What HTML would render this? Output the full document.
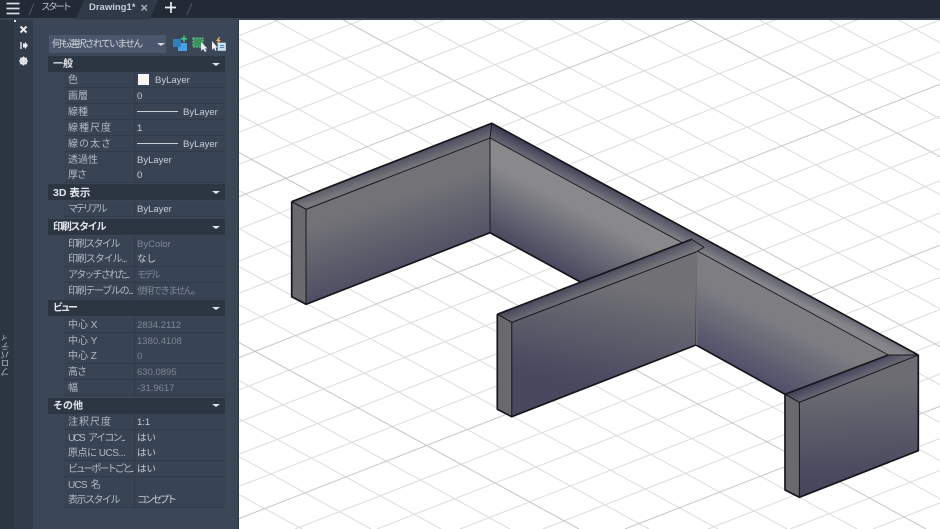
<!DOCTYPE html>
<html lang="ja"><head><meta charset="utf-8"><title>Drawing1</title>
<style>
html,body{margin:0;padding:0;background:#fff;width:940px;height:529px;overflow:hidden}
#p{position:relative;width:940px;height:529px;overflow:hidden;background:#fff;font-family:"Liberation Sans","Noto Sans CJK JP",sans-serif;font-size:9.5px;color:#c6cbd3;filter:blur(.35px)}
#p div{position:absolute;white-space:nowrap}
svg{position:absolute;left:0;top:0}
.h{left:48px;width:177px;height:16px;background:#2c3542;color:#e4e6ea;line-height:18px;text-indent:5px;font-weight:bold;font-size:10px}
.r{left:64px;width:161px;height:15px;background:#384354;border-bottom:1px solid #303a49;line-height:17px}
.r i{position:absolute;left:4px;top:0;font-style:normal;color:#b3bac4;font-size:10px}
.r b{position:absolute;left:73px;top:0;font-weight:normal;color:#c9ced6}
.r b.g{color:#7d8795}
.r:before{content:"";position:absolute;left:70px;top:0;width:1px;height:16px;background:#303a49}
.ln{position:absolute;left:73px;top:7px;width:41px;height:1px;background:#c9ced6}
.by{position:absolute;left:119px;top:0;color:#c9ced6}
</style></head><body>
<div id="p">
<svg width="940" height="529" viewBox="0 0 940 529">
<defs>
<linearGradient id="gL" gradientUnits="userSpaceOnUse" x1="420" y1="285" x2="392" y2="200"><stop offset="0" stop-color="#45465e"/><stop offset="1" stop-color="#727277"/></linearGradient>
<linearGradient id="gB" gradientUnits="userSpaceOnUse" x1="540" y1="262" x2="570" y2="205"><stop offset="0" stop-color="#47475f"/><stop offset="1" stop-color="#89898b"/></linearGradient>
<linearGradient id="gC" gradientUnits="userSpaceOnUse" x1="745" y1="372" x2="772" y2="318"><stop offset="0" stop-color="#50506a"/><stop offset="1" stop-color="#7e7e82"/></linearGradient>
<linearGradient id="gM" gradientUnits="userSpaceOnUse" x1="590" y1="385" x2="610" y2="285"><stop offset="0" stop-color="#48485f"/><stop offset="1" stop-color="#707075"/></linearGradient>
<linearGradient id="gR" gradientUnits="userSpaceOnUse" x1="855" y1="480" x2="850" y2="385"><stop offset="0" stop-color="#47475e"/><stop offset="1" stop-color="#6c6c72"/></linearGradient>
<linearGradient id="tL" gradientUnits="userSpaceOnUse" x1="388" y1="157" x2="394" y2="174"><stop offset="0" stop-color="#3f3f55"/><stop offset="1" stop-color="#77777c"/></linearGradient>
<linearGradient id="tB" gradientUnits="userSpaceOnUse" x1="712" y1="236" x2="703" y2="254"><stop offset="0" stop-color="#3f3f55"/><stop offset="1" stop-color="#85858a"/></linearGradient>
<linearGradient id="tM" gradientUnits="userSpaceOnUse" x1="593" y1="273" x2="600" y2="290"><stop offset="0" stop-color="#3f3f55"/><stop offset="1" stop-color="#77777c"/></linearGradient>
<linearGradient id="tR" gradientUnits="userSpaceOnUse" x1="835" y1="375" x2="842" y2="392"><stop offset="0" stop-color="#43435a"/><stop offset="1" stop-color="#7c7c82"/></linearGradient>
</defs>
<path fill="none" stroke="#dcdcdc" stroke-width="1" d="M862 0L940 42.7M793 0L940 80.7M723 0L940 118.7M585 0L940 194.7M515 0L940 232.7M446 0L940 270.7M377 0L940 308.7M239 .6L940 384.7M239 38.6L940 422.7M239 76.6L940 460.7M239 114.6L940 498.7M239 190.6L857 529M239 228.6L787 529M239 266.6L718 529M239 304.6L649 529M239 380.6L510 529M239 418.6L441 529M239 456.6L371 529M239 494.6L302 529M239 35.6L330 0M239 67.8L413 0M239 100L495 0M239 132.2L578 0M239 164.4L661 0M239 228.8L826 0M239 261L908 0M239 293.2L940 19.8M239 325.4L940 52M239 389.8L940 116.4M239 422L940 148.6M239 454.2L940 180.8M239 486.4L940 213M295 529L940 277.4M377 529L940 309.6M460 529L940 341.8M543 529L940 374M708 529L940 438.4M790 529L940 470.6M873 529L940 502.8"/>
<path fill="none" stroke="#c6c6c6" stroke-width="1" d="M654 0L940 156.7M307 0L940 346.7M239 152.6L926 529M239 342.6L579 529M239 196.6L743 0M239 357.6L940 84.2M239 518.6L940 245.2M625 529L940 406.2"/>
<g stroke="#16161c" stroke-width=".9" stroke-linejoin="round">
<polygon points="490,138 888.3,355 785,394.3 696,345 580,281.7 490,232.7" fill="url(#gB)" stroke="none"/>
<polygon points="696.7,251.7 888.3,355 785,394.3 696,345" fill="url(#gC)" stroke="none"/>
<path d="M490 232.7L580 281.7M696 345L785 394.3" fill="none" stroke-width="1.7"/>
<polygon points="491.7,123.3 918.3,355 888.3,355 490,138" fill="url(#tB)"/>
<polygon points="306,209.3 490,138 490,232.7 306,304.3" fill="url(#gL)"/>
<polygon points="291.7,201.7 491.7,123.3 490,138 306,209.3" fill="url(#tL)"/>
<polygon points="291.7,201.7 306,209.3 306,304.3 291.7,296.7" fill="#69696e"/>
<path d="M291.7 201.7L491.7 123.3L918.3 355M291.7 201.7V296.7L306 304.3L490 232.7" fill="none" stroke-width="1.7"/>
<polygon points="511.7,322.3 696.7,251.7 696,345 511.7,416.7" fill="url(#gM)"/>
<polygon points="497.3,314.3 691.7,239.3 704,247.3 696.7,251.7 511.7,322.3" fill="url(#tM)"/>
<polygon points="497.3,314.3 511.7,322.3 511.7,416.7 497.3,409.3" fill="#69696e"/>
<path d="M497.3 314.3L691.7 239.3M497.3 314.3V409.3L511.7 416.7L696 345" fill="none" stroke-width="1.7"/>
<path d="M696.7 252V345" fill="none" stroke="#7f7f85" stroke-width="1"/>
<polygon points="799.3,402.3 918.3,355 918.3,450.7 799.3,497.3" fill="url(#gR)"/>
<polygon points="785,394.3 888.3,355 918.3,355 799.3,402.3" fill="url(#tR)"/>
<polygon points="785,394.3 799.3,402.3 799.3,497.3 785,490" fill="#69696e"/>
<path d="M785 394.3L888.3 355M918.3 355V450.7L799.3 497.3L785 490V394.3" fill="none" stroke-width="1.7"/>
</g>
</svg>

<div style="left:0;top:0;width:940px;height:18px;background:#222a36"></div>
<div style="left:0;top:18px;width:940px;height:2px;background:#3a4454"></div>
<div style="left:0;top:20px;width:14px;height:509px;background:#2c3542"></div>
<div style="left:14px;top:20px;width:19px;height:509px;background:#323b49"></div>
<div style="left:33px;top:20px;width:205px;height:509px;background:#3b4657"></div>
<div style="left:238px;top:20px;width:1px;height:509px;background:#2c3542"></div>
<div style="left:14px;top:20px;width:2px;height:2px;background:#dfe3e8"></div>

<svg width="240" height="20" viewBox="0 0 240 20">
<polygon points="76,19 84,0 158,0 150,19" fill="#2f3947"/>
<path d="M6.500 3.500H19.500M6.500 8.500H19.500M6.500 13.500H19.500" stroke="#d9dce1" stroke-width="1.700"/>
<path d="M29 15L34 3M187 15L192 3" stroke="#4c5665" stroke-width="1"/>
<path d="M141.500 5L147 10.500M147 5L141.500 10.500" stroke="#a6adb8" stroke-width="1.500"/>
<path d="M171 2V13M165 7.500H176" stroke="#eceef1" stroke-width="1.700"/>
</svg>
<div style="left:41px;top:1px;line-height:14px;font-size:9.500px;letter-spacing:-2.4px;color:#bcc2cb">スタート</div>
<div style="left:89px;top:1px;line-height:14px;font-size:9.500px;font-weight:bold;color:#c9ced6">Drawing1*</div>

<svg width="240" height="80" viewBox="0 0 240 80" style="left:0;top:0">
<path d="M20.500 26.500L26.500 32.500M26.500 26.500L20.500 32.500" stroke="#e8eaee" stroke-width="2"/>
<path d="M21 42V49" stroke="#e8eaee" stroke-width="1.400"/><path d="M23 43.500H25V41.800L28 45.500L25 49.200V47.500H23Z" fill="#e8eaee"/>
<circle cx="23.500" cy="61" r="3" fill="none" stroke="#e8eaee" stroke-width="1.800"/>
<path d="M23.500 56.500V65.500M19 61H28M20.300 57.800L26.700 64.200M26.700 57.800L20.300 64.200" stroke="#e8eaee" stroke-width="1.100"/>
</svg>

<div style="left:49px;top:35px;width:117px;height:18px;background:#4a576d;border-radius:1px;line-height:19px;text-indent:3px;color:#d5d9df;font-size:9.800px;letter-spacing:-1.6px">何も選択されていません</div>
<div style="left:157px;top:43px;width:0;height:0;border-left:4px solid transparent;border-right:4px solid transparent;border-top:3px solid #d5d9df"></div>

<svg width="240" height="60" viewBox="0 0 240 60" style="left:0;top:0">
<rect x="178" y="43" width="9" height="8" fill="#4aa3e0"/><rect x="173" y="39" width="8" height="8" fill="#2e7fba"/>
<path d="M184 35.500V42M181 38.700H187" stroke="#3fcf7f" stroke-width="1.500"/>
<rect x="193" y="38" width="10" height="9" fill="#3f8f5f" stroke="#5fcf8a" stroke-dasharray="2 1"/>
<path d="M201 42V51L203 49L205 52L206.500 51L205 48.500H207.500Z" fill="#e8eaee"/>
<path d="M212 41V50L214 48L215.500 51L216.500 50.500L215.500 47.500H217.500Z" fill="#f2f2f2"/>
<path d="M219 37L216 41H218L217 44L221 40H219L220 37Z" fill="#e8b458"/>
<rect x="218" y="43" width="7.500" height="7.500" fill="#bfe0f2" stroke="#e8eaee" stroke-width=".6"/>
<path d="M220 45.500H224M220 47.500H224" stroke="#3a6f94" stroke-width=".8"/>
</svg>

<div class="h" style="top:56px">一般</div>
<div class="r" style="top:72px"><i>色</i><span style="position:absolute;left:74px;top:2px;width:11px;height:11px;background:#f7f7f7"></span><span class="by" style="left:91px">ByLayer</span></div>
<div class="r" style="top:88px"><i>画層</i><b>0</b></div>
<div class="r" style="top:104px"><i>線種</i><span class="ln"></span><span class="by">ByLayer</span></div>
<div class="r" style="top:120px"><i style="letter-spacing:1px">線種尺度</i><b>1</b></div>
<div class="r" style="top:136px"><i style="letter-spacing:1px">線の太さ</i><span class="ln"></span><span class="by">ByLayer</span></div>
<div class="r" style="top:152px"><i>透過性</i><b>ByLayer</b></div>
<div class="r" style="top:167px"><i style="letter-spacing:-1px">厚さ</i><b>0</b></div>

<div class="h" style="top:184px;font-size:10.500px">3D 表示</div>
<div class="r" style="top:201px"><i style="letter-spacing:-2.600px">マテリアル</i><b>ByLayer</b></div>

<div class="h" style="top:219px;letter-spacing:-1.300px">印刷スタイル</div>
<div class="r" style="top:236px"><i style="letter-spacing:-1.500px">印刷スタイル</i><b class="g">ByColor</b></div>
<div class="r" style="top:251px"><i style="letter-spacing:-1.100px">印刷スタイル...</i><b>なし</b></div>
<div class="r" style="top:267px"><i style="letter-spacing:-1.800px">アタッチされた...</i><b class="g" style="letter-spacing:-2.300px">モデル</b></div>
<div class="r" style="top:283px"><i style="letter-spacing:-1.300px">印刷テーブルの...</i><b class="g" style="letter-spacing:-1.700px">使用できません。</b></div>

<div class="h" style="top:300px;letter-spacing:-2.500px">ビュー</div>
<div class="r" style="top:317px"><i>中心 X</i><b class="g">2834.2112</b></div>
<div class="r" style="top:333px"><i>中心 Y</i><b class="g">1380.4108</b></div>
<div class="r" style="top:348px"><i>中心 Z</i><b class="g">0</b></div>
<div class="r" style="top:364px"><i style="letter-spacing:-1px">高さ</i><b class="g">630.0895</b></div>
<div class="r" style="top:380px"><i>幅</i><b class="g">-31.9617</b></div>

<div class="h" style="top:398px">その他</div>
<div class="r" style="top:414px"><i style="letter-spacing:1px">注釈尺度</i><b>1:1</b></div>
<div class="r" style="top:430px"><i style="letter-spacing:-1.700px;word-spacing:3px">UCS アイコン...</i><b>はい</b></div>
<div class="r" style="top:445px"><i style="letter-spacing:-.5px">原点に UCS...</i><b>はい</b></div>
<div class="r" style="top:461px"><i style="letter-spacing:-2.200px">ビューポートごと...</i><b>はい</b></div>
<div class="r" style="top:477px"><i style="letter-spacing:-.8px;word-spacing:2px">UCS 名</i></div>
<div class="r" style="top:492px"><i style="letter-spacing:-1.500px">表示スタイル</i><b style="letter-spacing:-2.500px;font-size:10px">コンセプト</b></div>

<div style="left:212px;top:63px;width:0;height:0;border-left:4px solid transparent;border-right:4px solid transparent;border-top:3px solid #e4e6ea"></div>
<div style="left:212px;top:191px;width:0;height:0;border-left:4px solid transparent;border-right:4px solid transparent;border-top:3px solid #e4e6ea"></div>
<div style="left:212px;top:226px;width:0;height:0;border-left:4px solid transparent;border-right:4px solid transparent;border-top:3px solid #e4e6ea"></div>
<div style="left:212px;top:307px;width:0;height:0;border-left:4px solid transparent;border-right:4px solid transparent;border-top:3px solid #e4e6ea"></div>
<div style="left:212px;top:404px;width:0;height:0;border-left:4px solid transparent;border-right:4px solid transparent;border-top:3px solid #e4e6ea"></div>

<div style="left:-1px;top:338px;width:12px;height:38px;writing-mode:vertical-rl;transform:rotate(180deg);font-size:8.500px;line-height:12px;color:#b8bec8">プロパティ</div>
</div>
</body></html>
